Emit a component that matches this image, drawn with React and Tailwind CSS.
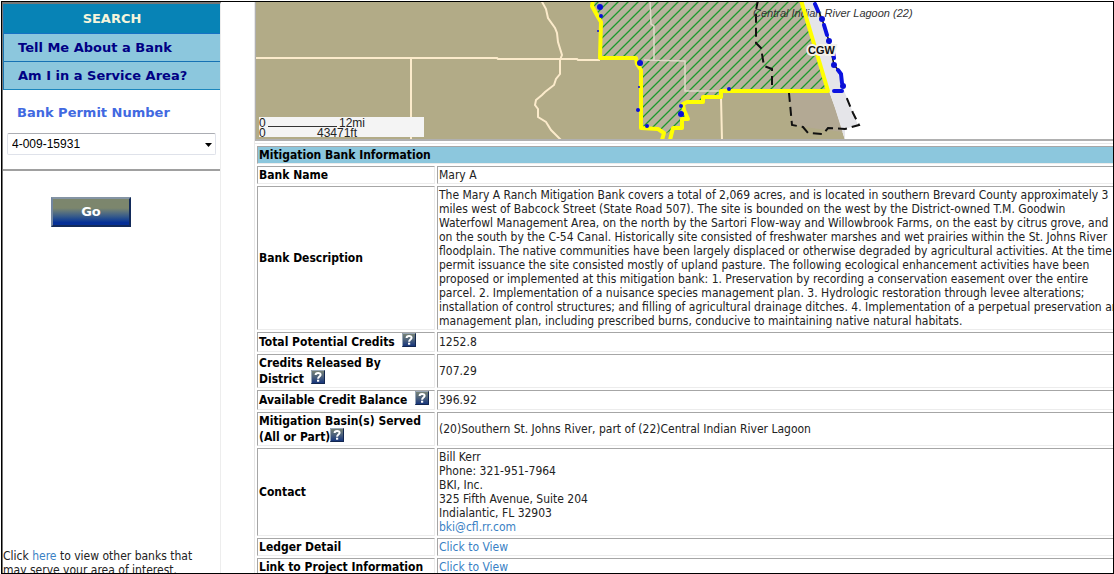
import React from "react";

const cell = "border border-t-[#a6a6a6] border-l-[#a6a6a6] border-r-[#ececec] border-b-[#ececec] px-px align-middle";

function HelpIcon() {
  return (
    <button type="button" aria-label="Help" className="-my-1 inline-block size-3.5 align-[-1px]">
      <svg viewBox="0 0 14 14" className="block size-3.5">
        <defs>
          <linearGradient id="help" x1="0" y1="0" x2="0" y2="1">
            <stop offset="0" stopColor="#7d8673" />
            <stop offset="0.45" stopColor="#51657b" />
            <stop offset="1" stopColor="#0f2f7c" />
          </linearGradient>
        </defs>
        <rect width="14" height="14" fill="url(#help)" />
        <path d="M0.5 13.5V0.5H13.5" fill="none" stroke="#9aa8b8" />
        <path d="M13.5 0.5V13.5H0.5" fill="none" stroke="#12264f" />
        <path d="M4.6 5.1C4.6 2.2 9.6 2.2 9.6 4.8C9.6 6.6 7.1 6.5 7.1 8.8" fill="none" stroke="#fff" strokeWidth="2" />
        <rect x="6" y="9.7" width="2.2" height="2" fill="#fff" />
      </svg>
    </button>
  );
}

function Row({ label, children, lines = "py-px" }) {
  return (
    <tr>
      <th scope="row" className={`${cell} ${lines} text-left font-bold whitespace-nowrap`}>
        {label}
      </th>
      <td className={`${cell} py-px whitespace-nowrap text-[#222]`}>{children}</td>
    </tr>
  );
}

const service =
  "M593 0L592 6L598 17L601 22L600 58L636 58L638 62L641 69L641 128L658 129L665 134L672 130L673 128L682 128L682 119L688 117L684 110L683 104L686 102L703 102L703 97L721 97L721 91L828 91L801 0Z";

function ServiceMap() {
  return (
    <svg className="block h-[137px] w-full bg-white" role="img" aria-label="Service area map">
      <defs>
        <pattern id="hatch" width="10" height="10" patternUnits="userSpaceOnUse">
          <path d="M-2 12L12 -2M-2 2L2 -2M8 12L12 8" style={{ stroke: "#1c9a2c", strokeWidth: 1.3 }} />
        </pattern>
      </defs>
      <g transform="translate(-256 -2)" fill="none">
        <path d="M256 0H802L829 91L835 108L845 140H256Z" fill="#b2ab87" />
        <path d="M789 92H829L835 108L843 132L803 127L792 124Z" fill="#b3a994" />
        <path d="M802 0H815L829 40L834 62L843 88L858 125L845 129V140L835 108L829 91Z" fill="#e5e5e9" />
        <path d={service} fill="#b8b29c" />
        <path d={service} fill="url(#hatch)" />
        <g stroke="#fcebcb" strokeWidth="2">
          <path d="M541 0L546 9L548 18L555 28L557 33L558 42L562 55L560 60V74L556 79L554 85L545 92L542 95L536 100L535 105L538 109V117L546 122L551 130L561 140" />
          <path d="M256 58H497L498 59H577L578 60H600M411 58V140M721 97L722 140" />
        </g>
        <path d="M650 0L651 24L654 26V60M644 60L685 61V91H721" stroke="#dedbc9" strokeWidth="1.5" />
        <g stroke="#111" strokeWidth="2" strokeDasharray="9 5">
          <path d="M758 0L756 10V43L761 48L764 66L772 69V90" />
          <path d="M789 93L792 125L803 127L808 133L823 134L828 128L845 129L859 125L853 113L845 94" />
        </g>
        <path d="M730 92H830" stroke="#22249b" strokeWidth="2" strokeDasharray="7 8" />
        <g fontFamily="Liberation Sans, sans-serif">
          <text x="753" y="17" fontSize="11" fontStyle="italic" fill="#333">Central Indian River Lagoon (22)</text>
        </g>
        <path d="M593 0L592 6L598 17L601 22L600 58L636 58L637 64L641 70V128L658 129L664 133L662 140M670 140L673 128H682V119H688L684 110L683 104L687 102H703V97H721V91H828L801 0" stroke="#ffff00" strokeWidth="4" strokeLinejoin="round" />
        <path d="M815 3L822 19L829 41L834 65L840 72L843 86" stroke="#111" strokeWidth="1.5" />
        <g stroke="#0b12e0" strokeWidth="4" strokeLinecap="round">
          <path d="M815 4L818 11M824 25L827 35M833 52L834 58M838 70L841 74L842 83M834 91H842" />
        </g>
        <g fill="#0a10d5">
          <circle cx="600" cy="7" r="3" /><circle cx="601" cy="16" r="2" /><circle cx="640" cy="63" r="3" />
          <circle cx="681" cy="114" r="3" /><circle cx="681" cy="106" r="2" /><circle cx="822" cy="19" r="3" />
          <circle cx="829" cy="41" r="3" /><circle cx="834" cy="65" r="3" /><circle cx="843" cy="86" r="3" />
          <circle cx="638" cy="110" r="2" /><circle cx="647" cy="126" r="2" /><circle cx="598" cy="31" r="1" />
          <circle cx="729" cy="89" r="2" /><circle cx="639" cy="87" r="1" />
        </g>
        <g fontFamily="Liberation Sans, sans-serif">
          <text x="808" y="54" fontSize="11" fontWeight="bold" fill="#111" stroke="#f4f2ea" strokeWidth="4" paintOrder="stroke">CGW</text>
          <rect x="259" y="117" width="165" height="20" fill="#f4f4f4" />
          <g fill="#222" fontSize="12">
            <text x="259" y="127">0</text><text x="339" y="127">12mi</text>
            <text x="259" y="137">0</text><text x="317" y="137">43471ft</text>
          </g>
          <path d="M268 126.500H337" stroke="#333" />
        </g>
      </g>
    </svg>
  );
}

export default function App() {
  return (
    <div className="h-screen overflow-hidden bg-white pt-px pl-px font-['DejaVu_Sans_Condensed','DejaVu_Sans',sans-serif] text-[12px] leading-[14px] text-black">
      <div className="flex h-full overflow-hidden border border-black">
        <aside className="flex w-[219px] shrink-0 flex-col border-t-2 border-r border-l border-t-[#777] border-r-[#ededed] border-l-[#777] font-['DejaVu_Sans',sans-serif]">
          <nav className="border-l border-[#1c78b4] text-[13px] font-bold">
            <h2 className="flex h-[30px] items-center justify-center border-b border-[#1672c4] bg-[#0783b6] text-[#f5f5dc]">SEARCH</h2>
            <a href="#bank" className="flex h-7 items-center border-b border-[#1672b4] bg-[#8cc7dd] pl-3.5 text-[#000084]">Tell Me About a Bank</a>
            <a href="#area" className="flex h-7 items-center border-b border-[#1b86bd] bg-[#8cc7dd] pl-3.5 text-[#000084]">Am I in a Service Area?</a>
          </nav>
          <form className="flex flex-col">
            <label htmlFor="permit" className="mt-[15px] ml-3.5 text-[13px] leading-4 font-bold text-[#4169e1]">Bank Permit Number</label>
            <div className="relative mx-1 mt-3">
              <select id="permit" className="block h-[22px] w-full appearance-none rounded-[2px] border border-[#dfe2ea] border-t-[#abadb3] bg-white pl-1 font-['Liberation_Sans',sans-serif] text-[12px] text-black">
                <option>4-009-15931</option>
              </select>
              <svg viewBox="0 0 7 4" className="pointer-events-none absolute top-2.5 right-1 h-1 w-[7px]"><path d="M0 0H7L3.500 4Z" /></svg>
            </div>
            <hr className="mt-3.5 border-t-2 border-[#a0a0a0]" />
            <button type="button" className="mt-[26px] ml-12 h-[30px] w-20 border-2 border-t-[#8494a4] border-r-[#122a5a] border-b-[#122a5a] border-l-[#7286a0] bg-linear-to-b from-[#7c866d] from-35% to-[#052f96] to-90% text-[13px] font-bold text-white">Go</button>
          </form>
          <p className="mt-auto h-6 shrink-0 overflow-hidden font-['DejaVu_Sans_Condensed','DejaVu_Sans',sans-serif] whitespace-nowrap text-[#222]">
            Click <a href="#other" className="text-[#3a7fc4]">here</a> to view other banks that<br />may serve your area of interest.
          </p>
        </aside>
        <main className="ml-[33px] min-w-0 flex-1 overflow-hidden border-l border-[#e8e8e8]">
          <div className="border-b-2 border-l border-[#b0b0b0]"><ServiceMap /></div>
          <div className="mt-0.5 border-t border-[#e8e8e8]">
            <table className="w-full border-separate border-spacing-[2px]">
              <colgroup>
                <col className="w-[178px] min-w-[178px]" />
                <col />
              </colgroup>
              <thead>
                <tr><th colSpan={2} className={`${cell} bg-[#8cc7dd] py-px text-left font-bold`}>Mitigation Bank Information</th></tr>
              </thead>
              <tbody>
                <Row label={<div className="min-w-[174px]">Bank Name</div>}>Mary A</Row>
                <Row label="Bank Description">
                  The Mary A Ranch Mitigation Bank covers a total of 2,069 acres, and is located in southern Brevard County approximately 3<br />
                  miles west of Babcock Street (State Road 507). The site is bounded on the west by the District-owned T.M. Goodwin<br />
                  Waterfowl Management Area, on the north by the Sartori Flow-way and Willowbrook Farms, on the east by citrus grove, and<br />
                  on the south by the C-54 Canal. Historically site consisted of freshwater marshes and wet prairies within the St. Johns River<br />
                  floodplain. The native communities have been largely displaced or otherwise degraded by agricultural activities. At the time<br />
                  permit issuance the site consisted mostly of upland pasture. The following ecological enhancement activities have been<br />
                  proposed or implemented at this mitigation bank: 1. Preservation by recording a conservation easement over the entire<br />
                  parcel. 2. Implementation of a nuisance species management plan. 3. Hydrologic restoration through levee alterations;<br />
                  installation of control structures; and filling of agricultural drainage ditches. 4. Implementation of a perpetual preservation and<br />
                  management plan, including prescribed burns, conducive to maintaining native natural habitats.
                </Row>
                <Row lines="py-px leading-4" label={<>Total Potential Credits &nbsp;<HelpIcon /></>}>1252.8</Row>
                <Row lines="py-0 leading-4" label={<>Credits Released By<br />District &nbsp;<HelpIcon /></>}>707.29</Row>
                <Row lines="py-px leading-4" label={<>Available Credit Balance &nbsp;<HelpIcon /></>}>396.92</Row>
                <Row lines="py-0 leading-4" label={<>Mitigation Basin(s) Served<br />(All or Part)<HelpIcon /></>}>(20)Southern St. Johns River, part of (22)Central Indian River Lagoon</Row>
                <Row label="Contact">
                  Bill Kerr<br />Phone: 321-951-7964<br />BKI, Inc.<br />325 Fifth Avenue, Suite 204<br />Indialantic, FL 32903<br />
                  <a href="mailto:bki@cfl.rr.com" className="text-[#3a7fc4]">bki@cfl.rr.com</a>
                </Row>
                <Row label="Ledger Detail"><a href="#ledger" className="text-[#3a7fc4]">Click to View</a></Row>
                <Row label="Link to Project Information"><a href="#project" className="text-[#3a7fc4]">Click to View</a></Row>
              </tbody>
            </table>
          </div>
        </main>
      </div>
    </div>
  );
}
